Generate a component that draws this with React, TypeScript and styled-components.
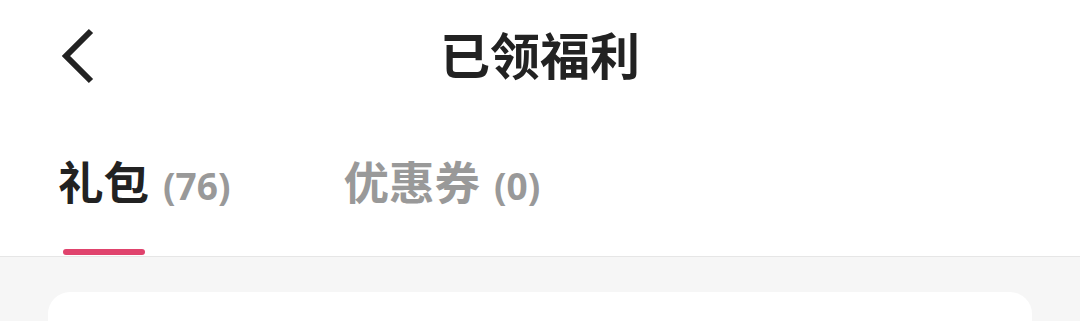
import React from "react";
import styled, { createGlobalStyle } from "styled-components";

const Global = createGlobalStyle`
  html, body { margin: 0; padding: 0; background: #f6f6f6; }
  body { font-family: "Noto Sans CJK SC", "Noto Sans", sans-serif; }
  * { box-sizing: border-box; }
`;

const Page = styled.div`
  width: 1080px;
  min-height: 321px;
  background: #f6f6f6;
  overflow: hidden;
`;

const Top = styled.div`
  background: #ffffff;
`;

const Header = styled.header`
  height: 106px;
  display: grid;
  grid-template-columns: 1fr auto 1fr;
  align-items: center;
`;

const BackButton = styled.button`
  justify-self: start;
  width: 60px;
  height: 60px;
  margin-left: 50px;
  margin-top: 6px;
  padding: 0;
  border: none;
  background: transparent;
  display: flex;
  align-items: center;
  justify-content: center;
  cursor: pointer;
`;

const Title = styled.h1`
  margin: 0;
  font-size: 50px;
  line-height: 60px;
  font-weight: 700;
  color: #222222;
  letter-spacing: 0;
`;

const TabBar = styled.nav`
  display: flex;
  gap: 113px;
  padding: 44px 0 1px 58px;
  border-bottom: 1px solid #e6e6e6;
`;

const Tab = styled.div`
  display: flex;
  align-items: baseline;
  gap: 14px;
  cursor: pointer;
`;

const NameCol = styled.div`
  display: flex;
  flex-direction: column;
  align-items: center;
`;

const Name = styled.span<{ $active?: boolean }>`
  font-size: 45.5px;
  line-height: 60px;
  font-weight: 700;
  color: ${(p) => (p.$active ? "#222222" : "#999999")};
`;

const Count = styled.span`
  font-family: "Open Sans", "Noto Sans", sans-serif;
  font-size: 37px;
  line-height: 60px;
  font-weight: 700;
  color: #999999;
`;

const Bar = styled.span<{ $active?: boolean }>`
  width: 82px;
  height: 6px;
  margin-top: 39px;
  border-radius: 3px;
  background: ${(p) => (p.$active ? "#e0436d" : "transparent")};
`;

const Content = styled.main`
  padding: 35px 48px 0;
`;

const Card = styled.section`
  height: 220px;
  background: #ffffff;
  border-radius: 22px;
`;

const tabs = [
  { name: "礼包", count: 76, active: true },
  { name: "优惠券", count: 0, active: false },
];

export default function App() {
  return (
    <Page>
      <Global />
      <Top>
        <Header>
          <BackButton aria-label="返回">
            <svg width="60" height="60" viewBox="0 0 60 60">
              <polyline
                points="41,5 16,30 41,55"
                fill="none"
                stroke="#222222"
                strokeWidth="6"
                strokeLinecap="butt"
                strokeLinejoin="miter"
              />
            </svg>
          </BackButton>
          <Title>已领福利</Title>
          <div />
        </Header>
        <TabBar>
          {tabs.map((t) => (
            <Tab key={t.name}>
              <NameCol>
                <Name $active={t.active}>{t.name}</Name>
                <Bar $active={t.active} />
              </NameCol>
              <Count>({t.count})</Count>
            </Tab>
          ))}
        </TabBar>
      </Top>
      <Content>
        <Card />
      </Content>
    </Page>
  );
}
